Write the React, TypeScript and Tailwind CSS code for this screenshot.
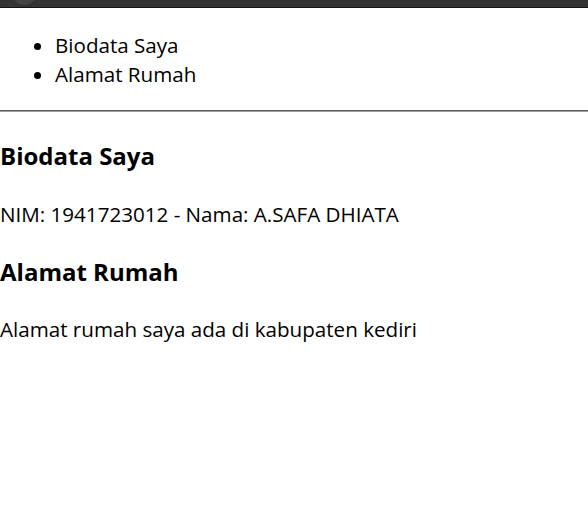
export default function App() {
  return (
    <div className="min-h-[505px] bg-white text-black font-['Open_Sans',sans-serif]">
      {/* window chrome strip */}
      <div className="relative h-[8px] overflow-hidden bg-[#333333] border-b border-[#151515]">
        <div className="absolute left-[12px] top-[-20px] h-[25px] w-[25px] rounded-full bg-[#444444]" />
      </div>

      <ul className="mt-[23px] pl-[55px] list-disc text-[20.6px] leading-[29.3px]">
        <li>Biodata Saya</li>
        <li>Alamat Rumah</li>
      </ul>

      <hr className="mt-[20.6px] border-t border-b border-t-[#595959] border-b-[#a0a0a0]" />

      <h3 className="mt-[26.7px] text-[24px] font-bold leading-[34.2px]">Biodata Saya</h3>
      <p className="mt-[25.7px] pt-px text-[20.6px] leading-[29.3px]">NIM: 1941723012 - Nama: A.SAFA DHIATA</p>

      <h3 className="mt-[25.7px] text-[24px] font-bold leading-[34.2px]">Alamat Rumah</h3>
      <p className="mt-[25.7px] text-[20.6px] leading-[29.3px]">Alamat rumah saya ada di kabupaten kediri</p>
    </div>
  );
}
